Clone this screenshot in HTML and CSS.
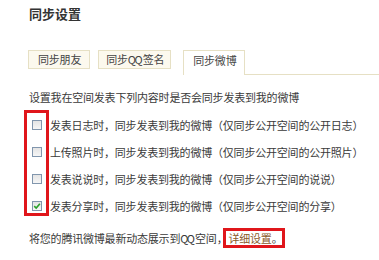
FILE: index.html
```html
<!DOCTYPE html>
<html lang="zh-CN">
<head>
<meta charset="utf-8">
<title>同步设置</title>
<link rel="stylesheet" href="styles.css">
</head>
<body>
<div class="page">
  <h2 class="title">同步设置</h2>
  <div class="tabs">
    <div class="tab">同步朋友</div>
    <div class="tab tab-second">同步<span class="latin">QQ</span>签名</div>
    <div class="tab tab-active">同步微博</div>
    <div class="tab-fill"></div>
  </div>
  <p class="desc">设置我在空间发表下列内容时是否会同步发表到我的微博</p>
  <div class="options">
    <div class="mark-box"></div>
    <div class="row"><span class="cb"></span><span class="label">发表日志时，同步发表到我的微博（仅同步公开空间的公开日志）</span></div>
    <div class="row"><span class="cb"></span><span class="label">上传照片时，同步发表到我的微博（仅同步公开空间的公开照片）</span></div>
    <div class="row"><span class="cb"></span><span class="label">发表说说时，同步发表到我的微博（仅同步公开空间的说说）</span></div>
    <div class="row"><span class="cb cb-checked"><svg viewBox="0 0 10 10" width="8" height="8"><path d="M1.5 5.2 L4 7.6 L8.6 2.2" fill="none" stroke="#2aa12a" stroke-width="2"/></svg></span><span class="label">发表分享时，同步发表到我的微博（仅同步公开空间的分享）</span></div>
  </div>
  <p class="footer"><span>将您的腾讯微博最新动态展示到<span class="latin">QQ</span>空间，</span><span class="detail"><span class="detail-link">详细设置</span>。</span></p>
</div>
</body>
</html>
```
FILE: styles.css
```css
html, body {
  margin: 0;
  padding: 0;
  background: #fff;
}
body {
  font-family: "Noto Sans CJK SC", "Liberation Sans", sans-serif;
  font-size: 11px;
  color: #3a3a3a;
  letter-spacing: -0.2px;
}
.page {
  padding: 4px 0 0 29px;
}
.title {
  margin: 0;
  font-size: 13px;
  line-height: 20px;
  font-weight: bold;
  color: #333;
  letter-spacing: 0;
}
.latin {
  letter-spacing: -1.5px;
  margin-right: 1.5px;
}
.tabs {
  display: flex;
  align-items: flex-start;
  margin: 26px 0 0 -1px;
}
.tab {
  height: 17px;
  line-height: 17px;
  padding: 0 8px 0 9px;
  border: 1px solid #e6e0c4;
  background: #fcf9ee;
  color: #444;
  margin-right: 8px;
}
.tab-second {
  padding: 0 6px 0 7px;
  margin-right: 12px;
}
.tab-active {
  height: 24px;
  line-height: 18px;
  border-bottom: none;
  background: #fff;
  margin-right: 0;
}
.tab-fill {
  flex: 1;
  height: 24px;
  border-bottom: 1px solid #e6e0c4;
}
.desc {
  margin: 12px 0 0 0;
  line-height: 20px;
}
.options {
  position: relative;
  margin-top: 4px;
}
.row {
  display: flex;
  align-items: center;
  height: 27px;
}
.cb {
  display: inline-flex;
  align-items: center;
  justify-content: center;
  box-sizing: border-box;
  width: 10px;
  height: 10px;
  margin: 0 8px 0 3px;
  border: 1px solid #8196ad;
  background: linear-gradient(#e4e4e4, #f6f6f6);
}
.mark-box {
  position: absolute;
  left: -5px;
  top: -1px;
  width: 19px;
  height: 100px;
  border: 3px solid #e0161b;
}
.footer {
  margin: 9px 0 0 0;
  display: flex;
  align-items: center;
  line-height: 14px;
}
.detail {
  display: inline-block;
  margin-left: -4px;
  border: 3px solid #e0161b;
  padding: 1px 0 1px 2px;
  line-height: 12px;
  color: #333;
}
.detail-link {
  color: #8a5a2a;
}
```
